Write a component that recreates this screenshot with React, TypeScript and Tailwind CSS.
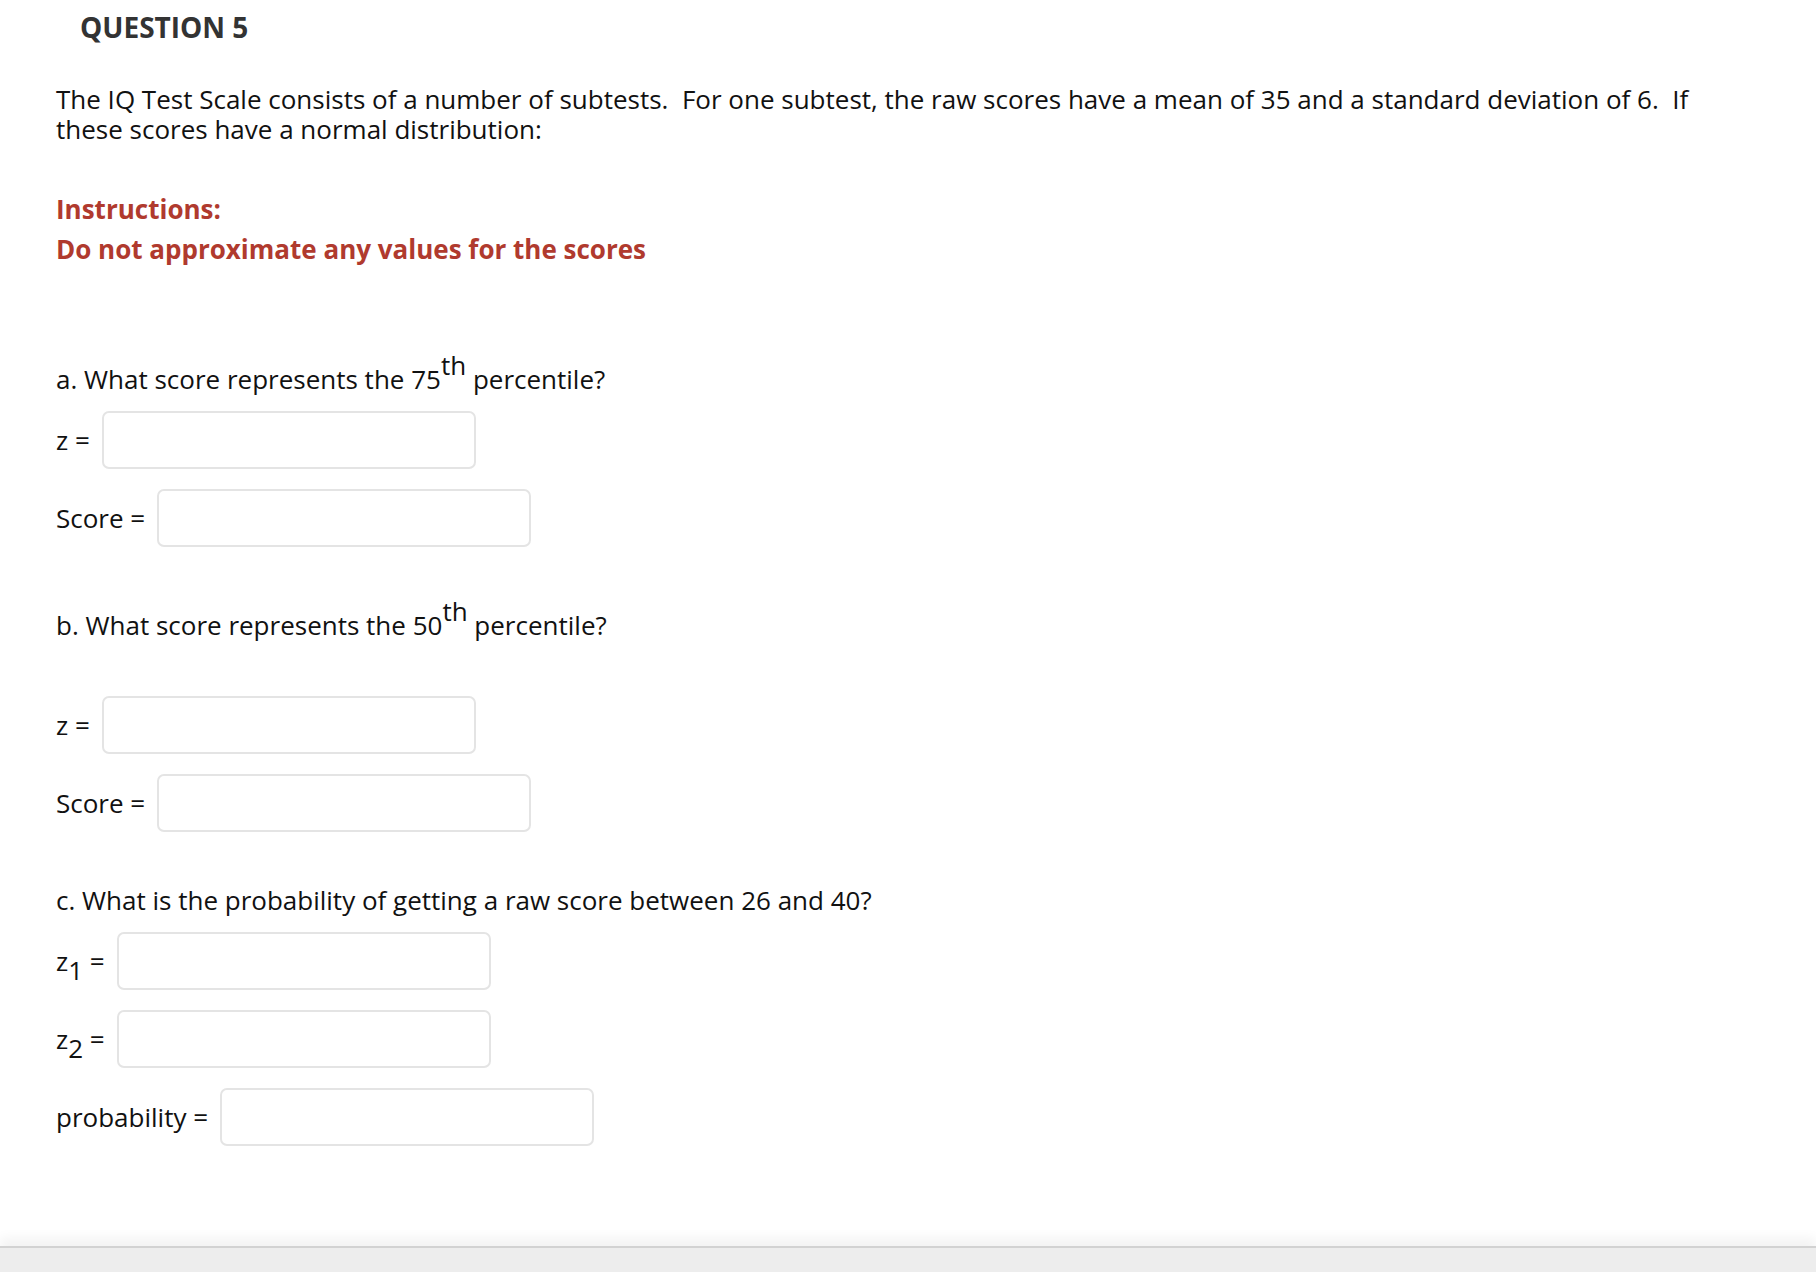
const font = { fontFamily: '"Open Sans", "Liberation Sans", sans-serif' };

function Field({ label, sub }: { label: string; sub?: string }) {
  return (
    <div className="flex items-center gap-3">
      <span className="whitespace-nowrap">
        {label}
        {sub && <sub className="text-[1em] bottom-[-0.35em]">{sub}</sub>}
        {" ="}
      </span>
      <input
        type="text"
        className="h-[58px] w-[374px] rounded-[7px] border-2 border-[#e4e4e4] bg-white px-3 outline-none"
      />
    </div>
  );
}

export default function App() {
  return (
    <div className="flex min-h-screen flex-col bg-white text-[#111]" style={font}>
      <div className="flex-1 px-[56px] text-[26px] leading-[30px]">
        <h2 className="mt-[12px] pl-[24px] text-[28px] font-bold text-[#333]">QUESTION 5</h2>

        <p className="mt-[42px] max-w-[1660px]">
          The IQ Test Scale consists of a number of subtests.&nbsp; For one subtest, the raw scores have a mean of 35
          and a standard deviation of 6.&nbsp; If these scores have a normal distribution:
        </p>

        <div className="mt-[50px] font-bold text-[#b03a2e]">
          <p>Instructions:</p>
          <p className="mt-[10px]">Do not approximate any values for the scores</p>
        </div>

        {/* part a */}
        <p className="mt-[100px]">
          a. What score represents the 75<sup className="text-[1em] top-[-0.55em]">th</sup> percentile?
        </p>
        <div className="mt-[17px] flex flex-col gap-5">
          <Field label="z" />
          <Field label="Score" />
        </div>

        {/* part b */}
        <p className="mt-[63px]">
          b. What score represents the 50<sup className="text-[1em] top-[-0.55em]">th</sup> percentile?
        </p>
        <div className="mt-[56px] flex flex-col gap-5">
          <Field label="z" />
          <Field label="Score" />
        </div>

        {/* part c */}
        <p className="mt-[53px]">c. What is the probability of getting a raw score between 26 and 40?</p>
        <div className="mt-[17px] flex flex-col gap-5">
          <Field label="z" sub="1" />
          <Field label="z" sub="2" />
          <Field label="probability" />
        </div>
      </div>

      <div className="h-[26px] border-t-2 border-[#d2d2d2] bg-[#ededed] shadow-[0_-8px_12px_rgba(0,0,0,0.05)]" />
    </div>
  );
}
